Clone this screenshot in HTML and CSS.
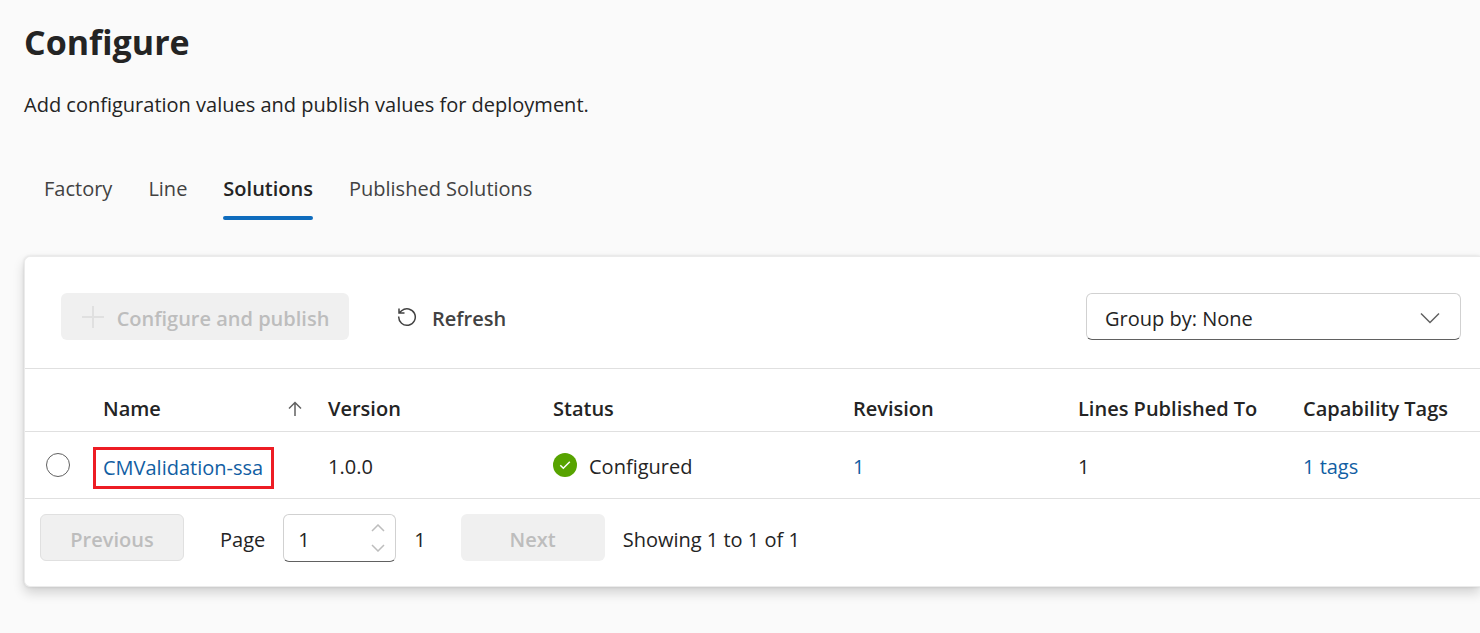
FILE: index.html
```html
<!DOCTYPE html>
<html lang="en">
<head>
<meta charset="utf-8">
<meta name="viewport" content="width=device-width, initial-scale=1">
<title>Configure</title>
<link rel="stylesheet" href="styles.css">
</head>
<body>
<main class="page">
  <h1 class="title">Configure</h1>
  <p class="subtitle">Add configuration values and publish values for deployment.</p>

  <div class="tabs" role="tablist">
    <button class="tab" role="tab" type="button">Factory</button>
    <button class="tab" role="tab" type="button">Line</button>
    <button class="tab tab-active" role="tab" type="button" aria-selected="true">Solutions</button>
    <button class="tab" role="tab" type="button">Published Solutions</button>
  </div>

  <section class="card">
    <div class="toolbar">
      <button class="button button-disabled publish" type="button" disabled>
        <svg class="icon-plus" viewBox="0 0 24 24" aria-hidden="true"><path d="M12 1v22M1 12h22"/></svg>
        <span class="button-text">Configure and publish</span>
      </button>
      <button class="button refresh" type="button">
        <svg class="icon-refresh" viewBox="0 0 20 20" aria-hidden="true"><path d="M1.700 9.500a8.300 8.300 0 1 0 2.900-5.800L2 6M2 1.600v4.400h5.500"/></svg>
        <span class="button-text">Refresh</span>
      </button>
      <div class="select-wrap">
        <select class="select" aria-label="Group by">
          <option>Group by: None</option>
        </select>
        <svg class="icon-chevron" viewBox="0 0 20 12" aria-hidden="true"><path d="M1 1.500l9 9 9-9"/></svg>
      </div>
    </div>

    <table class="grid">
      <colgroup>
        <col class="col-pick"><col class="col-std"><col class="col-std"><col class="col-wide"><col class="col-std"><col class="col-std"><col>
      </colgroup>
      <thead>
        <tr>
          <td></td>
          <th scope="col" aria-sort="ascending">
            <div class="sorted">Name
              <svg class="icon-sort" viewBox="0 0 14 16" aria-hidden="true"><path d="M7 15V1.500M1 7.500l6-6 6 6"/></svg>
            </div>
          </th>
          <th scope="col">Version</th>
          <th scope="col">Status</th>
          <th scope="col">Revision</th>
          <th scope="col">Lines Published To</th>
          <th scope="col">Capability Tags</th>
        </tr>
      </thead>
      <tbody>
        <tr>
          <td class="pick"><input class="radio" type="radio" name="solution" aria-label="Select CMValidation-ssa"></td>
          <td class="marked-cell"><a class="link marked" href="#solution">CMValidation-ssa</a></td>
          <td>1.0.0</td>
          <td>
            <div class="status">
              <svg class="icon-ok" viewBox="0 0 24 24" aria-hidden="true"><circle cx="12" cy="12" r="12"/><path d="M7.300 12.300l3 3 6.500-6.600"/></svg>
              Configured
            </div>
          </td>
          <td><a class="link" href="#revision">1</a></td>
          <td>1</td>
          <td><a class="link" href="#tags">1 tags</a></td>
        </tr>
      </tbody>
    </table>

    <div class="pager">
      <button class="button button-disabled pager-button previous" type="button" disabled><span class="button-text">Previous</span></button>
      <label class="page-label" for="page">Page</label>
      <div class="spin">
        <input class="spin-input" id="page" type="number" value="1" min="1">
        <div class="spin-buttons">
          <button class="spin-button" type="button" aria-label="Next page number"><svg class="icon-spin" viewBox="0 0 14 8" aria-hidden="true"><path d="M1 7l6-6 6 6"/></svg></button>
          <button class="spin-button" type="button" aria-label="Previous page number"><svg class="icon-spin" viewBox="0 0 14 8" aria-hidden="true"><path d="M1 1l6 6 6-6"/></svg></button>
        </div>
      </div>
      <span class="page-count">1</span>
      <button class="button button-disabled pager-button" type="button" disabled><span class="button-text">Next</span></button>
      <span class="showing">Showing 1 to 1 of 1</span>
    </div>
  </section>
</main>
</body>
</html>
```

FILE: styles.css
```css
* { box-sizing: border-box; }

body {
  margin: 0;
  background: #fafafa;
  color: #242424;
  font: 400 20px/28px "Segoe UI", "Open Sans", "Noto Sans", sans-serif;
  overflow-x: hidden;
}

button, input, select { font: inherit; color: inherit; }

svg { flex: none; fill: none; stroke: currentColor; }

.page { padding: 18px 0 46px 24px; }

.title { margin: 0; font-size: 34px; line-height: 48px; font-weight: 700; }

.subtitle { margin: 25px 0 0; }

.tabs { display: flex; gap: 36px; margin: 56px 0 0 20px; }

.tab {
  padding: 0 0 13px;
  border: 0;
  border-bottom: 4px solid transparent;
  background: none;
  color: #424242;
}

.tab-active {
  position: relative;
  color: #242424;
  font-weight: 600;
}

.tab-active::after {
  content: "";
  position: absolute;
  left: 0;
  right: 0;
  bottom: -4px;
  height: 4px;
  border-radius: 2px;
  background: #0f6cbd;
}

.card {
  margin-top: 36px;
  background: #fff;
  border: 1px solid #ebebeb;
  border-right: 0;
  border-radius: 6px 0 0 6px;
  box-shadow: 0 0 3px rgba(0, 0, 0, .12), 0 6px 12px rgba(0, 0, 0, .16);
}

.toolbar {
  display: flex;
  align-items: center;
  padding: 36px 19px 28px 36px;
  border-bottom: 1px solid #e0e0e0;
}

.button {
  display: flex;
  align-items: center;
  justify-content: center;
  height: 47px;
  border: 1px solid transparent;
  border-radius: 6px;
  background: none;
  font-weight: 600;
}

.button-text { padding-top: 4px; }

.button-disabled { background: #f0f0f0; color: #bdbdbd; }

.publish { width: 288px; gap: 12px; padding: 0; }

.icon-plus { width: 24px; height: 24px; stroke: #e0e0e0; stroke-width: 2; }

.refresh { gap: 15px; margin-left: 36px; padding: 0 11px; color: #424242; }

.icon-refresh { width: 20px; height: 20px; stroke-width: 1.5; }

.select-wrap {
  position: relative;
  flex: 0 1 375px;
  margin-left: auto;
}

.select {
  display: block;
  width: 100%;
  height: 47px;
  padding: 4px 48px 0 18px;
  appearance: none;
  border: 1px solid #d1d1d1;
  border-bottom-color: #616161;
  border-radius: 6px;
  background: #fff;
}

.icon-chevron {
  position: absolute;
  top: 19px;
  right: 21px;
  width: 20px;
  height: 12px;
  color: #616161;
  stroke-width: 1.5;
  pointer-events: none;
}

.grid { width: 100%; table-layout: fixed; border-collapse: collapse; }

.col-pick { width: 66px; }
.col-std { width: 225px; }
.col-wide { width: 300px; }

.grid th, .grid td {
  padding: 0 12px;
  border-bottom: 1px solid #e0e0e0;
  text-align: left;
  white-space: nowrap;
}

.grid th { height: 62px; padding-top: 18px; font-weight: 600; }
.grid th:last-child, .grid td:last-child { padding-right: 0; }
.grid tbody td { height: 67px; padding-top: 4px; }

.sorted { display: flex; align-items: center; justify-content: space-between; }

.icon-sort { width: 14px; height: 16px; margin-right: 2px; color: #616161; stroke-width: 1.5; }

.grid .pick { padding: 0 0 0 21px; }

.radio {
  display: block;
  width: 24px;
  height: 24px;
  margin: 0;
  appearance: none;
  border: 1px solid #616161;
  border-radius: 50%;
}

.link { color: #115ea3; text-decoration: none; }

.grid .marked-cell { padding: 6px 0 0 2px; }

.marked {
  display: inline-block;
  padding: 4px 8px 4px 7px;
  border: 3px solid #ed1c24;
}

.status { display: flex; align-items: center; gap: 12px; }

.icon-ok { width: 24px; height: 24px; margin-bottom: 4px; stroke: none; }
.icon-ok circle { fill: #57a300; }
.icon-ok path { stroke: #fff; stroke-width: 1.5; }

.pager { display: flex; align-items: center; padding: 15px 15px 24px; }

.pager-button { width: 144px; }
.previous { border-color: #e0e0e0; }

.page-label { margin: 0 18px 0 36px; padding-top: 4px; }

.spin {
  display: flex;
  width: 113px;
  height: 48px;
  border: 1px solid #d1d1d1;
  border-bottom-color: #616161;
  border-radius: 6px;
}

.spin-input {
  flex: 1;
  min-width: 0;
  padding: 4px 0 0 14px;
  appearance: textfield;
  border: 0;
  background: none;
}

.spin-input::-webkit-inner-spin-button { appearance: none; margin: 0; }

.spin-buttons {
  display: flex;
  flex-direction: column;
  justify-content: center;
  gap: 12px;
  padding-right: 10px;
}

.spin-button { display: flex; padding: 0; border: 0; background: none; color: #bdbdbd; }

.icon-spin { width: 14px; height: 8px; stroke-width: 1.5; }

.page-count { margin: 0 35px 0 18px; padding-top: 4px; }

.showing { margin-left: 18px; padding-top: 4px; }
```
